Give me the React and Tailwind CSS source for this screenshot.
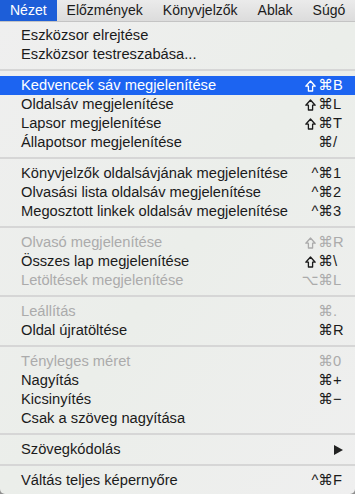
import React from "react";

const FONT = { fontFamily: '"Liberation Sans", Arial, "DejaVu Sans", sans-serif' };

const menus = ["Nézet", "Előzmények", "Könyvjelzők", "Ablak", "Súgó"];

// each group is separated by a line
const groups = [
  [
    { label: "Eszközsor elrejtése" },
    { label: "Eszközsor testreszabása..." },
  ],
  [
    { label: "Kedvencek sáv megjelenítése", shift: true, mods: "⌘", key: "B", active: true },
    { label: "Oldalsáv megjelenítése", shift: true, mods: "⌘", key: "L" },
    { label: "Lapsor megjelenítése", shift: true, mods: "⌘", key: "T" },
    { label: "Állapotsor megjelenítése", mods: "⌘", key: "/" },
  ],
  [
    { label: "Könyvjelzők oldalsávjának megjelenítése", mods: "^⌘", key: "1" },
    { label: "Olvasási lista oldalsáv megjelenítése", mods: "^⌘", key: "2" },
    { label: "Megosztott linkek oldalsáv megjelenítése", mods: "^⌘", key: "3" },
  ],
  [
    { label: "Olvasó megjelenítése", shift: true, mods: "⌘", key: "R", disabled: true },
    { label: "Összes lap megjelenítése", shift: true, mods: "⌘", key: "\\" },
    { label: "Letöltések megjelenítése", mods: "⌥⌘", key: "L", disabled: true },
  ],
  [
    { label: "Leállítás", mods: "⌘", key: ".", disabled: true },
    { label: "Oldal újratöltése", mods: "⌘", key: "R" },
  ],
  [
    { label: "Tényleges méret", mods: "⌘", key: "0", disabled: true },
    { label: "Nagyítás", mods: "⌘", key: "+" },
    { label: "Kicsinyítés", mods: "⌘", key: "−" },
    { label: "Csak a szöveg nagyítása" },
  ],
  [{ label: "Szövegkódolás", submenu: true }],
  [{ label: "Váltás teljes képernyőre", mods: "^⌘", key: "F" }],
];

function ShiftIcon() {
  return (
    <svg width="11" height="12" viewBox="0 0 11 12" className="mr-[2px]">
      <path
        d="M5.5 1 L10.2 6.2 L7.6 6.2 L7.6 11 L3.4 11 L3.4 6.2 L0.8 6.2 Z"
        fill="none"
        stroke="currentColor"
        strokeWidth="1.3"
        strokeLinejoin="round"
      />
    </svg>
  );
}

function MenuRow({ item }) {
  const color = item.active
    ? "text-white bg-[#1c64f1]"
    : item.disabled
    ? "text-[#ababab]"
    : "text-[#1b1b1b]";

  return (
    <div className={`h-[19px] flex items-center pl-[21px] pr-[10px] text-[14.7px] ${color}`}>
      <span className="flex-1 whitespace-nowrap">{item.label}</span>
      {item.submenu && (
        <svg width="9" height="10" viewBox="0 0 9 10" className="mr-[2px]">
          <path d="M0 0 L9 5 L0 10 Z" fill="#222" />
        </svg>
      )}
      {item.mods && (
        <span className="flex items-center whitespace-nowrap">
          {item.shift && <ShiftIcon />}
          <span className="text-right">{item.mods}</span>
          <span className="w-[12px] text-left">{item.key}</span>
        </span>
      )}
    </div>
  );
}

export default function App() {
  return (
    <div className="w-[355px] h-[494px] bg-[#8f8f8f] overflow-hidden" style={FONT}>

      {/* menu bar */}
      <div className="h-[22px] flex items-center bg-gradient-to-b from-[#ebebeb] to-[#dcdcdc] border-b border-[#c4c4c4] text-[14px] text-[#1b1b1b]">
        {menus.map((m, i) => (
          <div
            key={m}
            className={`h-full flex items-center px-[10px] ${i === 0 ? "bg-[#1d5ed8] text-white" : ""}`}
          >
            {m}
          </div>
        ))}
      </div>

      {/* dropdown */}
      <div className="h-[472px] bg-gradient-to-br from-[#efefef] via-[#ebeeea] to-[#efefef] rounded-b-[5px] pt-[4px]">
        {groups.map((g, gi) => (
          <div key={gi}>
            {gi > 0 && (
              <div className="h-[12px] flex items-center">
                <div className="w-full h-[2px] bg-[#d6d6d6]" />
              </div>
            )}
            {g.map((item) => (
              <MenuRow key={item.label} item={item} />
            ))}
          </div>
        ))}
      </div>

    </div>
  );
}
